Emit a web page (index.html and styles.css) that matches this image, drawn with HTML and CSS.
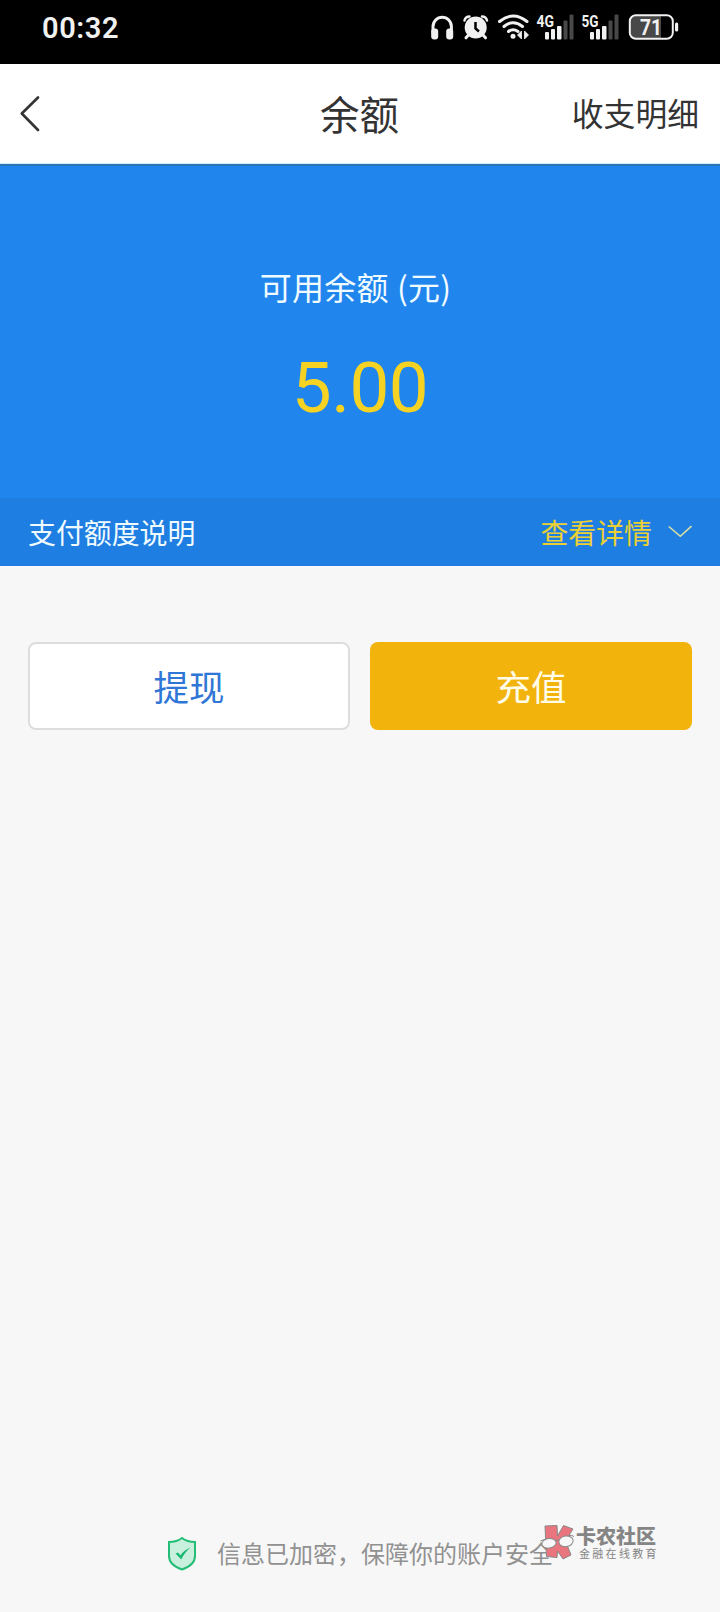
FILE: index.html
```html
<!DOCTYPE html>
<html lang="zh-CN">
<head>
<meta charset="utf-8">
<title>余额</title>
<link rel="stylesheet" href="styles.css">
</head>
<body>
<div class="screen">
  <div class="status">
    <span class="time">00:32</span>
    <svg class="status-icons" width="260" height="64" viewBox="420 0 260 64">
      <path d="M433 34v-7.500a9.200 9.200 0 0 1 18.400 0V34" fill="none" stroke="#f1f1f1" stroke-width="3"/>
      <rect x="431.200" y="28.500" width="7" height="11" rx="3" fill="#f1f1f1"/>
      <rect x="446.200" y="28.500" width="7" height="11" rx="3" fill="#f1f1f1"/>
      <g stroke="#f1f1f1" stroke-linecap="round" fill="none">
        <path d="M464.500 20.500q1-4 5-4M487 20.500q-1-4-5-4" stroke-width="2.500"/>
        <path d="M468.500 35l-2.500 2.800M483 35l2.500 2.800" stroke-width="3"/>
      </g>
      <circle cx="475.700" cy="27.500" r="11" fill="#f1f1f1"/>
      <path d="M475.500 22v6.500l3.500 3" fill="none" stroke="#000" stroke-width="2.500"/>
      <g fill="none" stroke="#f1f1f1" stroke-width="3" stroke-linecap="round">
        <path d="M499.500 21.500q13.500-11 27.500 0"/>
        <path d="M504 26.500q9-7.500 18.500 0"/>
        <path d="M508.500 31.500q4.500-3.500 9.500 0"/>
      </g>
      <circle cx="513" cy="36.300" r="2.500" fill="#f1f1f1"/>
      <path d="M521.500 31v8l-4-4zM524.500 31l4 4-4 4z" fill="#f1f1f1" stroke="#f1f1f1" stroke-width=".8"/>
      <text class="net" x="536.500" y="27" textLength="17.500" lengthAdjust="spacingAndGlyphs">4G</text>
      <g fill="#f1f1f1">
        <rect x="545" y="32" width="4" height="7.500" rx="1"/>
        <rect x="551" y="29" width="4" height="10.500" rx="1"/>
        <rect x="557" y="26" width="4.500" height="13.500" rx="1"/>
        <rect x="590" y="32" width="4" height="7.500" rx="1"/>
        <rect x="596" y="29" width="4" height="10.500" rx="1"/>
        <rect x="602" y="26" width="4.500" height="13.500" rx="1"/>
      </g>
      <g fill="#484848">
        <rect x="563.500" y="20.500" width="4" height="19" rx="1"/>
        <rect x="569.500" y="14.500" width="4" height="25" rx="1"/>
        <rect x="608.500" y="20.500" width="4" height="19" rx="1"/>
        <rect x="614.500" y="14.500" width="4" height="25" rx="1"/>
      </g>
      <text class="net" x="581.500" y="27" textLength="17" lengthAdjust="spacingAndGlyphs">5G</text>
      <path d="M635 16h26v22h-26q-5 0-5-5v-12q0-5 5-5z" fill="#484848"/>
      <rect x="629.800" y="15.300" width="43" height="23.400" rx="6" fill="none" stroke="#f1f1f1" stroke-width="2"/>
      <rect x="675" y="22.500" width="3.200" height="9" rx="1.500" fill="#f1f1f1"/>
      <text class="battery" x="640" y="35" textLength="22" lengthAdjust="spacingAndGlyphs">71</text>
    </svg>
  </div>

  <header class="nav">
    <svg class="back" width="20" height="36" viewBox="0 0 20 36"><path d="M18 1.500L1.800 17.500 18 34" fill="none" stroke="#333" stroke-width="2.600" stroke-linecap="round" stroke-linejoin="round"/></svg>
    <h1 class="title">余额</h1>
    <a class="records">收支明细</a>
  </header>

  <section class="balance">
    <div class="label">可用余额 (元)</div>
    <div class="amount">5.00</div>
  </section>

  <div class="quota">
    <span>支付额度说明</span>
    <span class="details">查看详情
      <svg width="24" height="13" viewBox="0 0 24 13"><path d="M.8 1.500L12.300 11.300 23.500 1" fill="none" stroke="#d9e1a2" stroke-width="1.600"/></svg>
    </span>
  </div>

  <div class="actions">
    <button class="btn withdraw">提现</button>
    <button class="btn recharge">充值</button>
  </div>

  <footer class="secure">
    <svg width="30" height="36" viewBox="0 0 30 36"><path d="M15 2Q20 6 28 6V20Q28 29 15 33.500 2 29 2 20V6Q10 6 15 2z" fill="#c8f0dd" stroke="#23bd76" stroke-width="2"/><path d="M8.500 17.500L11 16.500 13.500 19.200Q17 14 23.500 11.500 18 16 14.200 23.500z" fill="#1fb873"/></svg>
    <span>信息已加密，保障你的账户安全</span>
    <div class="watermark">
      <svg width="46" height="40" viewBox="0 0 46 40">
        <path d="M16 5L28 4.500 28.500 15 34.500 4.500 44 8 36.500 20 42 34 34 38 28.500 30 28 36.500 17.500 35.500z" fill="#e9757e" stroke="#888" stroke-width="1"/>
        <path d="M11.500 20q3-1.500 6-2M27 20q1.500-1.500 3-1M40 14.500q3-.5 5 1" fill="none" stroke="#888"/>
        <ellipse cx="20" cy="22.300" rx="7.200" ry="4.800" transform="rotate(-8 20 22.300)" fill="#f7f7f7" stroke="#888"/>
        <ellipse cx="37" cy="20.300" rx="7.200" ry="5.300" transform="rotate(-10 37 20.300)" fill="#f7f7f7" stroke="#888"/>
      </svg>
      <div class="brand"><b>卡农社区</b><small>金融在线教育</small></div>
    </div>
  </footer>
</div>
</body>
</html>
```
FILE: styles.css
```css
* { box-sizing: border-box; }
body { margin: 0; background: #f7f7f7; }
.screen {
  width: 720px;
  height: 1612px;
  display: flex;
  flex-direction: column;
  background: #f7f7f7;
  color: #333;
  font-family: Roboto, "Noto Sans CJK SC", sans-serif;
}
.status {
  height: 64px;
  flex: none;
  display: flex;
  justify-content: space-between;
  background: #000;
  color: #f1f1f1;
  padding: 0 40px 0 42px;
}
.time { font-size: 29px; font-weight: 600; line-height: 56px; letter-spacing: 0.6px; }
.net { font: 700 17px Roboto, sans-serif; fill: #f1f1f1; }
.battery { font: 700 22px Roboto, sans-serif; fill: #f1f1f1; }
.nav {
  height: 100px;
  flex: none;
  display: grid;
  grid-template-columns: 1fr auto 1fr;
  align-items: center;
  padding: 0 21px 0 20px;
  background: #fff;
  border-bottom: 1px solid #d5eefa;
  font-family: "Noto Sans CJK SC", sans-serif;
}
.title { margin: 0; padding-bottom: 2px; font-size: 39.500px; line-height: 60px; font-weight: 400; }
.records { justify-self: end; padding-bottom: 3px; font-size: 31.800px; line-height: 48px; }
.balance {
  height: 334px;
  flex: none;
  border-top: 2px solid #2a75b5;
  background: #2086ee;
  text-align: center;
}
.label {
  padding: 96px 9px 0 0;
  font: 32px/48px "Noto Sans CJK SC", sans-serif;
  letter-spacing: 0.200px;
  word-spacing: 1px;
  color: #f0fbff;
}
.amount { margin-top: 36px; font-size: 71px; line-height: 84px; letter-spacing: -0.500px; color: #f6d223; }
.quota {
  height: 68px;
  flex: none;
  display: flex;
  align-items: center;
  justify-content: space-between;
  padding: 0 28px 1px;
  background: #1f7ee1;
  color: #f0fbff;
  font: 27.900px/40px "Noto Sans CJK SC", sans-serif;
}
.details { display: flex; align-items: center; gap: 16px; color: #ebd035; }
.actions { display: grid; grid-template-columns: 1fr 1fr; gap: 20px; padding: 76px 28px 0; }
.btn {
  height: 88px;
  padding: 0 0 1px;
  border: 0;
  border-radius: 8px;
  font: 35.500px/52px "Noto Sans CJK SC", sans-serif;
}
.withdraw { border: 2px solid #ddd; background: #fff; color: #2f76d6; }
.recharge { background: #f2b30d; color: #fffde9; }
.secure {
  position: relative;
  display: flex;
  align-items: center;
  gap: 20px;
  margin-top: auto;
  height: 36px;
  margin-bottom: 40px;
  padding-left: 167px;
  color: #919191;
  font: 24px/36px "Noto Sans CJK SC", sans-serif;
}
.secure > span { padding-bottom: 2px; }
.watermark { position: absolute; left: 529px; top: -15px; display: flex; gap: 1px; color: #858585; }
.brand { display: flex; flex-direction: column; padding-top: 5px; }
.brand b { font-size: 20px; line-height: 20px; font-weight: 900; }
.brand small { margin: 1px 0 0 3px; font-size: 11px; line-height: 13px; letter-spacing: 2.300px; }
```
